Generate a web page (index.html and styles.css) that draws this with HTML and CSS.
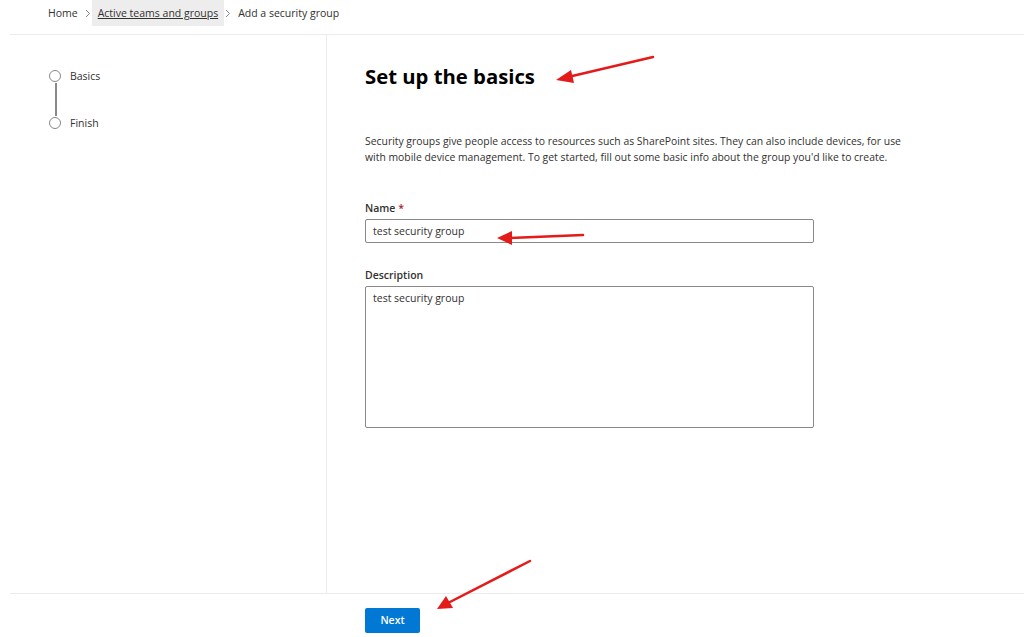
FILE: index.html
```html
<!DOCTYPE html>
<html>
<head>
<meta charset="utf-8">
<link rel="stylesheet" href="styles.css">
</head>
<body>
<nav class="crumbs">
  <span class="crumb">Home</span>
  <svg class="chev" width="6" height="9" viewBox="0 0 6 9"><polyline points="1,1 4.5,4.5 1,8" fill="none" stroke="#8a8886" stroke-width="1"/></svg>
  <span class="crumb link">Active teams and groups</span>
  <svg class="chev" width="6" height="9" viewBox="0 0 6 9"><polyline points="1,1 4.5,4.5 1,8" fill="none" stroke="#8a8886" stroke-width="1"/></svg>
  <span class="crumb">Add a security group</span>
</nav>
<div class="main">
  <aside class="steps">
    <div class="step"><span class="dot"></span><span class="label">Basics</span></div>
    <div class="connector"></div>
    <div class="step"><span class="dot"></span><span class="label">Finish</span></div>
  </aside>
  <section class="content">
    <h1 class="title">Set up the basics</h1>
    <p class="intro">Security groups give people access to resources such as SharePoint sites. They can also include devices, for use with mobile device management. To get started, fill out some basic info about the group you'd like to create.</p>
    <label class="field-label">Name <span class="req">*</span></label>
    <div class="input">test security group</div>
    <label class="field-label desc">Description</label>
    <div class="textarea">test security group</div>
  </section>
</div>
<footer class="footer">
  <button class="next">Next</button>
</footer>
<svg class="arrows" width="1024" height="637" viewBox="0 0 1024 637">
  <g stroke="#e31b1b" stroke-width="2.5" fill="#e31b1b" stroke-linecap="round">
    <line x1="653" y1="57" x2="568" y2="77"/>
    <polygon points="556,80 571,70 574,83" stroke="none"/>
    <line x1="583" y1="235" x2="510" y2="238"/>
    <polygon points="497,238 512,231 512,245" stroke="none"/>
    <line x1="530" y1="561" x2="448" y2="603"/>
    <polygon points="437,609 446,596 453,608" stroke="none"/>
  </g>
</svg>
</body>
</html>
```
FILE: styles.css
```css
html, body {
  margin: 0;
  padding: 0;
  background: #fff;
  font-family: "Open Sans", "Noto Sans", sans-serif;
  color: #323130;
  width: 1024px;
  height: 637px;
  overflow: hidden;
  position: relative;
}
.crumbs {
  height: 34px;
  display: flex;
  align-items: flex-start;
  padding-left: 42px;
  font-size: 10.5px;
  color: #323130;
}
.crumb {
  height: 26px;
  line-height: 26px;
  padding: 0 6px;
}
.crumb.link {
  background: #ededed;
  text-decoration: underline;
}
.chev {
  margin: 9px 1px 0 1px;
  flex: none;
}
.main {
  margin-left: 10px;
  height: 560px;
  border-top: 1px solid #edebe9;
  border-bottom: 1px solid #edebe9;
  display: flex;
  box-sizing: border-box;
}
.steps {
  width: 317px;
  flex: none;
  border-right: 1px solid #edebe9;
  box-sizing: border-box;
  padding: 34px 0 0 39px;
}
.step {
  display: flex;
  align-items: center;
  height: 14px;
}
.dot {
  width: 10px;
  height: 10px;
  border: 1.5px solid #8a8886;
  border-radius: 50%;
  flex: none;
}
.label {
  margin-left: 9px;
  font-size: 10.5px;
  color: #323130;
}
.connector {
  width: 1.5px;
  height: 33px;
  background: #8a8886;
  margin-left: 6px;
}
.content {
  padding-left: 38px;
  flex: 1;
}
.title {
  margin: 27px 0 0 0;
  font-size: 20.3px;
  font-weight: 700;
  color: #000;
  line-height: 28px;
}
.intro {
  margin: 43px 0 0 0;
  font-size: 10.4px;
  line-height: 16px;
  width: 548px;
  color: #323130;
}
.field-label {
  display: block;
  margin-top: 36px;
  font-size: 10.5px;
  font-weight: 600;
  line-height: 14px;
  color: #323130;
}
.field-label.desc {
  margin-top: 25px;
}
.req {
  color: #a4262c;
}
.input {
  margin-top: 4px;
  width: 449px;
  height: 24px;
  box-sizing: border-box;
  border: 1px solid #8a8886;
  border-radius: 2px;
  padding: 0 7px;
  font-size: 10.5px;
  line-height: 22px;
}
.textarea {
  margin-top: 4px;
  width: 449px;
  height: 142px;
  box-sizing: border-box;
  border: 1px solid #8a8886;
  border-radius: 2px;
  padding: 4px 7px;
  font-size: 10.5px;
  line-height: 14px;
}
.footer {
  padding: 13px 0 0 365px;
}
.next {
  width: 55px;
  height: 25px;
  border: none;
  border-radius: 2px;
  background: #0078d4;
  color: #fff;
  font-family: "Open Sans", "Noto Sans", sans-serif;
  font-weight: 600;
  font-size: 10.5px;
  padding: 0;
}
.arrows {
  position: absolute;
  left: 0;
  top: 0;
  pointer-events: none;
}
```
